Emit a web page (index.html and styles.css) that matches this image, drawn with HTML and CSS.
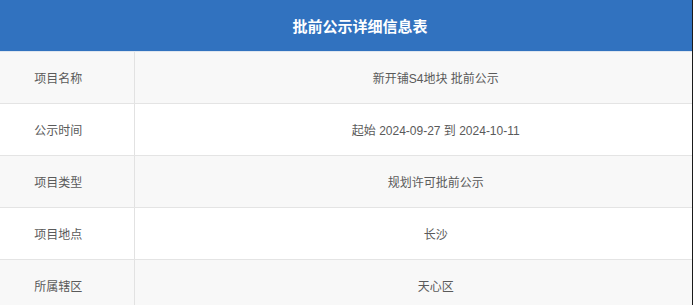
FILE: index.html
```html
<!DOCTYPE html>
<html lang="zh-CN">
<head>
<meta charset="utf-8">
<title>批前公示详细信息表</title>
<link rel="stylesheet" href="styles.css">
</head>
<body>
<div class="frame">
  <table class="info">
    <colgroup><col class="col-label"><col class="col-value"></colgroup>
    <thead>
      <tr><th colspan="2" class="title">批前公示详细信息表</th></tr>
    </thead>
    <tbody>
      <tr class="odd"><td class="label">项目名称</td><td class="value">新开铺S4地块 批前公示</td></tr>
      <tr><td class="label">公示时间</td><td class="value">起始 2024-09-27 到 2024-10-11</td></tr>
      <tr class="odd"><td class="label">项目类型</td><td class="value">规划许可批前公示</td></tr>
      <tr><td class="label">项目地点</td><td class="value">长沙</td></tr>
      <tr class="odd"><td class="label">所属辖区</td><td class="value">天心区</td></tr>
    </tbody>
  </table>
</div>
</body>
</html>
```

FILE: styles.css
```css
html, body {
  margin: 0;
  padding: 0;
  background: #ffffff;
  overflow: hidden;
}
body {
  font-family: "Liberation Sans", "Noto Sans CJK SC", sans-serif;
  width: 693px;
  height: 305px;
}
.frame {
  width: 692px;
  height: 305px;
  overflow: hidden;
  border-right: 1px solid #1a1a1a;
}
.info {
  margin-left: -17px;
  width: 754px;
  border-collapse: collapse;
  table-layout: fixed;
}
.col-label {
  width: 151px;
}
.title {
  height: 51px;
  background: #3172bf;
  color: #ffffff;
  font-size: 15px;
  font-weight: bold;
  text-align: center;
  vertical-align: middle;
  padding: 0;
  border-bottom: 1px solid #dfe6ef;
}
.info td {
  height: 51px;
  padding: 0;
  font-size: 12px;
  color: #5a5a5a;
  text-align: center;
  vertical-align: middle;
  border-bottom: 1px solid #e4e4e4;
}
.info tr.odd td {
  background: #f8f8f8;
}
.label {
  border-right: 1px solid #e2e2e2;
}
```
